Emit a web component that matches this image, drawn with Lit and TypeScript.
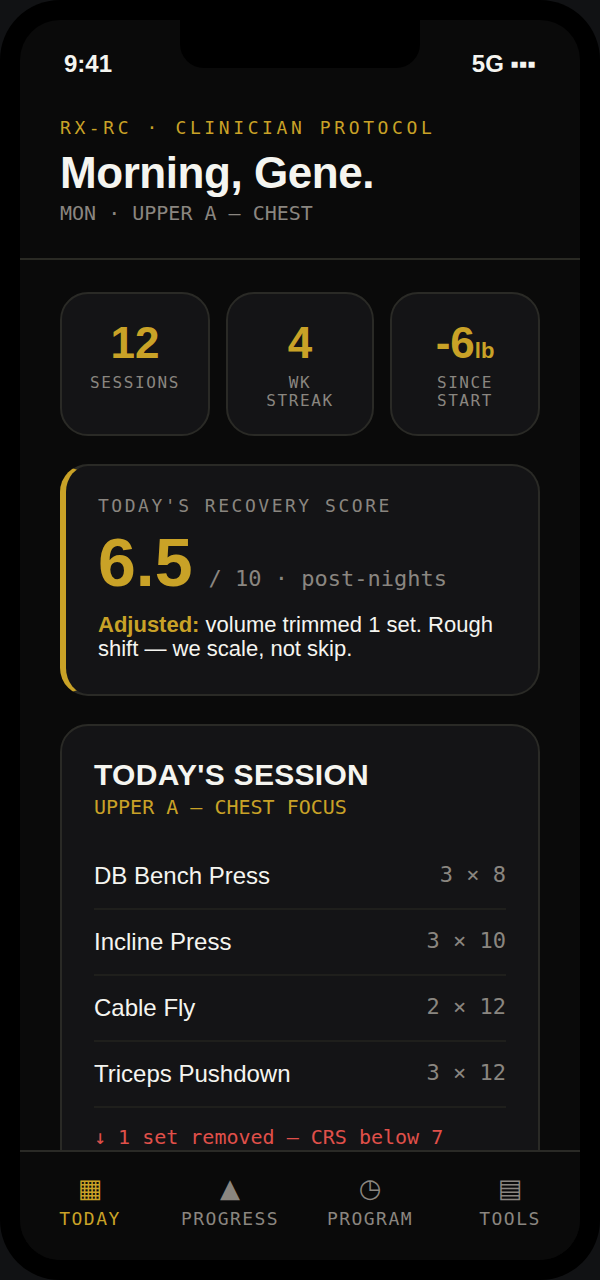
import { LitElement, html, css } from 'lit';
import { customElement } from 'lit/decorators.js';

const exercises = [
  { name: 'DB Bench Press', sets: '3 × 8' },
  { name: 'Incline Press', sets: '3 × 10' },
  { name: 'Cable Fly', sets: '2 × 12' },
  { name: 'Triceps Pushdown', sets: '3 × 12' },
];

const tabs = [
  { icon: '▦', label: 'TODAY', active: true },
  { icon: '▲', label: 'PROGRESS', active: false },
  { icon: '◷', label: 'PROGRAM', active: false },
  { icon: '▤', label: 'TOOLS', active: false },
];

@customElement('app-root')
export class AppRoot extends LitElement {
  static styles = css`
    :host {
      display: block;
      width: 600px;
      height: 1280px;
      background: #111214;
      font-family: 'Liberation Sans', Arial, sans-serif;
      color: #f5f5f0;
      --mono: 'DejaVu Sans Mono', monospace;
      --gold: #c9a227;
      --muted: #8a8680;
    }

    .phone {
      position: relative;
      box-sizing: border-box;
      width: 600px;
      height: 1280px;
      padding: 20px;
      background: #000;
      border-radius: 60px;
    }

    .notch {
      position: absolute;
      top: 20px;
      left: 180px;
      width: 240px;
      height: 48px;
      background: #000;
      border-radius: 0 0 24px 24px;
    }

    .screen {
      display: flex;
      flex-direction: column;
      height: 1240px;
      background: #0a0a0a;
      border-radius: 40px;
      overflow: hidden;
    }

    .status {
      display: flex;
      flex: none;
      justify-content: space-between;
      align-items: center;
      height: 28px;
      padding: 30px 44px 0;
      font-size: 24px;
      font-weight: 700;
      line-height: 28px;
    }

    .head {
      flex: none;
      padding: 39px 40px 33px;
      border-bottom: 2px solid #2a2a24;
    }

    .eyebrow {
      font-family: var(--mono);
      font-size: 18px;
      line-height: 21px;
      letter-spacing: 0.2em;
      color: var(--gold);
    }

    h1 {
      margin: 8px 0 0;
      font-size: 44px;
      line-height: 53px;
      font-weight: 700;
      letter-spacing: -0.01em;
    }

    .sub {
      margin-top: 2px;
      font-family: var(--mono);
      font-size: 20px;
      line-height: 24px;
      color: var(--muted);
    }

    .body {
      flex: 1;
      min-height: 0;
      overflow: hidden;
      padding: 32px 40px 0;
    }

    .stats {
      display: grid;
      grid-template-columns: 150fr 148fr 150fr;
      gap: 16px;
    }

    .stat {
      box-sizing: border-box;
      height: 144px;
      padding: 24px 8px 0;
      background: #141416;
      border: 2px solid #2a2a26;
      border-radius: 28px;
      text-align: center;
    }

    .stat-value {
      font-size: 44px;
      line-height: 50px;
      font-weight: 700;
      color: var(--gold);
    }

    .stat-value small {
      font-size: 22px;
      line-height: 0;
    }

    .stat-label {
      margin-top: 6px;
      font-family: var(--mono);
      font-size: 16px;
      line-height: 18px;
      letter-spacing: 0.1em;
      color: var(--muted);
    }

    .recovery {
      box-sizing: border-box;
      height: 232px;
      margin-top: 28px;
      padding: 29px 32px 0;
      background: #141416;
      border: 2px solid #2a2a26;
      border-left: 6px solid var(--gold);
      border-radius: 28px;
    }

    .recovery-label {
      font-family: var(--mono);
      font-size: 18px;
      line-height: 21px;
      letter-spacing: 0.14em;
      color: var(--muted);
    }

    .score {
      display: flex;
      align-items: baseline;
      gap: 16px;
      margin-top: 5px;
    }

    .score b {
      font-size: 68px;
      line-height: 82px;
      color: var(--gold);
    }

    .score span {
      font-family: var(--mono);
      font-size: 22px;
      color: var(--muted);
    }

    .note {
      margin-top: 10px;
      font-size: 22px;
      line-height: 24px;
    }

    .note b {
      color: var(--gold);
    }

    .session {
      margin-top: 28px;
      padding: 31px 32px 30px;
      background: #141416;
      border: 2px solid #2a2a26;
      border-radius: 28px;
    }

    h2 {
      margin: 0;
      font-size: 30px;
      line-height: 36px;
      font-weight: 700;
      letter-spacing: 0.01em;
    }

    .focus {
      margin-top: 2px;
      margin-bottom: 25px;
      font-family: var(--mono);
      font-size: 20px;
      line-height: 24px;
      color: var(--gold);
    }

    .row {
      display: flex;
      justify-content: space-between;
      align-items: center;
      box-sizing: border-box;
      height: 66px;
      border-bottom: 2px solid #1f1f1c;
      font-size: 24px;
    }

    .row span {
      margin-bottom: 4px;
      font-family: var(--mono);
      font-size: 22px;
      color: var(--muted);
    }

    .warn {
      margin-top: 17px;
      font-family: var(--mono);
      font-size: 20px;
      line-height: 24px;
      color: #e0504a;
    }

    nav {
      display: flex;
      flex: none;
      box-sizing: border-box;
      height: 110px;
      padding-top: 18px;
      background: #0a0a0a;
      border-top: 2px solid #2a2a26;
    }

    .tab {
      flex: 1;
      text-align: center;
      color: var(--muted);
    }

    .tab.on {
      color: var(--gold);
    }

    .tab-icon {
      font-family: 'DejaVu Sans', sans-serif;
      font-size: 26px;
      line-height: 36px;
    }

    .tab-label {
      margin-top: 2px;
      font-family: var(--mono);
      font-size: 18px;
      line-height: 21px;
      letter-spacing: 0.08em;
    }
  `;

  render() {
    return html`
      <div class="phone">
        <div class="screen">
          <div class="status"><span>9:41</span><span>5G ▪▪▪</span></div>
          <header class="head">
            <div class="eyebrow">RX-RC · CLINICIAN PROTOCOL</div>
            <h1>Morning, Gene.</h1>
            <div class="sub">MON · UPPER A — CHEST</div>
          </header>
          <main class="body">
            <section class="stats">
              <div class="stat">
                <div class="stat-value">12</div>
                <div class="stat-label">SESSIONS</div>
              </div>
              <div class="stat">
                <div class="stat-value">4</div>
                <div class="stat-label">WK<br />STREAK</div>
              </div>
              <div class="stat">
                <div class="stat-value">-6<small>lb</small></div>
                <div class="stat-label">SINCE<br />START</div>
              </div>
            </section>
            <section class="recovery">
              <div class="recovery-label">TODAY'S RECOVERY SCORE</div>
              <div class="score"><b>6.5</b><span>/ 10 · post-nights</span></div>
              <div class="note">
                <b>Adjusted:</b> volume trimmed 1 set. Rough shift — we scale, not skip.
              </div>
            </section>
            <section class="session">
              <h2>TODAY'S SESSION</h2>
              <div class="focus">UPPER A — CHEST FOCUS</div>
              ${exercises.map(
                (e) => html`<div class="row">${e.name}<span>${e.sets}</span></div>`
              )}
              <div class="warn">↓ 1 set removed — CRS below 7</div>
            </section>
          </main>
          <nav>
            ${tabs.map(
              (t) => html`
                <div class="tab ${t.active ? 'on' : ''}">
                  <div class="tab-icon">${t.icon}</div>
                  <div class="tab-label">${t.label}</div>
                </div>
              `
            )}
          </nav>
        </div>
        <div class="notch"></div>
      </div>
    `;
  }
}
